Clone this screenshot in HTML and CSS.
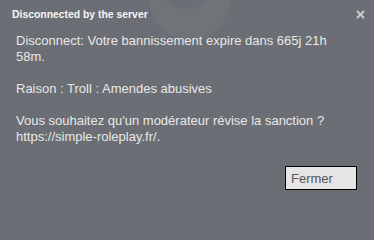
FILE: index.html
```html
<!DOCTYPE html>
<html lang="fr">
<head>
<meta charset="utf-8">
<link rel="stylesheet" href="styles.css">
</head>
<body>
<div class="dialog">
  <svg class="bg-logo" width="90" height="40" viewBox="0 0 90 40">
    <path d="M5 0 A40 40 0 0 0 85 0 L85 -5 L5 -5 Z M22 0 A23 18 0 0 0 62 0 Z" fill="#ffffff" fill-opacity="0.035" fill-rule="evenodd"/>
  </svg>
  <div class="header">
    <span class="title">Disconnected by the server</span>
    <svg class="close" width="9" height="9" viewBox="0 0 9 9">
      <path d="M1 1 L8 8 M8 1 L1 8" stroke="#c9cacc" stroke-width="2"/>
    </svg>
  </div>
  <div class="content">
    <p>Disconnect: Votre bannissement expire dans 665j 21h 58m.</p>
    <p>Raison : Troll : Amendes abusives</p>
    <p>Vous souhaitez qu'un modérateur révise la sanction ? https://simple-roleplay.fr/.</p>
  </div>
  <div class="footer">
    <button class="btn">Fermer</button>
  </div>
</div>
</body>
</html>
```

FILE: styles.css
```css
html, body {
  margin: 0;
  padding: 0;
  background: #6b6e74;
}
.dialog {
  position: relative;
  width: 374px;
  height: 209px;
  box-sizing: border-box;
  display: flex;
  flex-direction: column;
  font-family: "Liberation Sans", Arial, sans-serif;
  overflow: hidden;
}
.bg-logo {
  position: absolute;
  left: 145px;
  top: 0;
}
.header {
  display: flex;
  justify-content: space-between;
  align-items: center;
  padding: 8px 9px 0 12px;
  height: 12px;
}
.title {
  color: #f6f6f6;
  font-weight: bold;
  font-size: 10.4px;
}
.close {
  display: block;
}
.content {
  padding: 13px 16px 0 16px;
  color: #e8e8e8;
  font-size: 13px;
  line-height: 16px;
}
.content p {
  margin: 0 0 16px 0;
}
.footer {
  margin-top: auto;
  display: flex;
  justify-content: flex-end;
  padding: 0 17px 19px 0;
}
.btn {
  width: 72px;
  height: 24px;
  background: #e5e5e5;
  border: 1px solid #000;
  color: #555;
  font-family: "Liberation Sans", Arial, sans-serif;
  font-size: 13px;
  text-align: left;
  padding: 0 0 0 5px;
  margin: 0;
}
```
